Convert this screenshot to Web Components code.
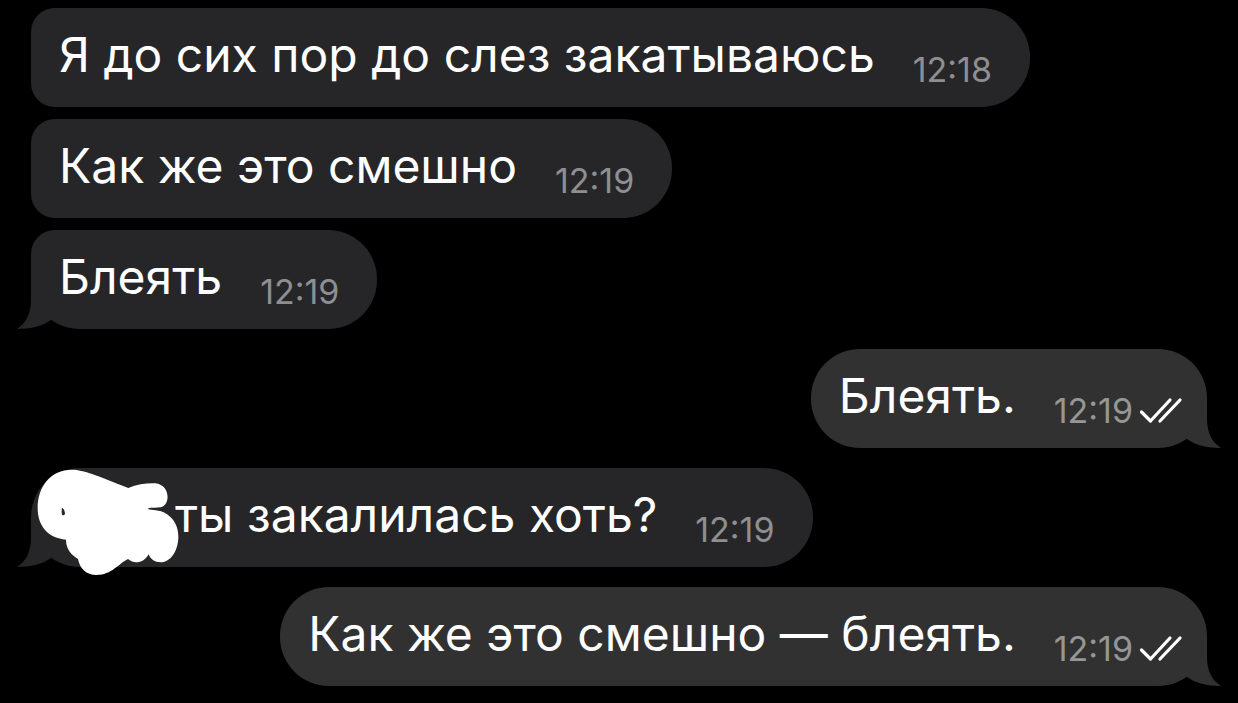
<!DOCTYPE html>
<html lang="ru">
<head>
<meta charset="utf-8">
<meta name="viewport" content="width=device-width, initial-scale=1">
<title>Чат</title>
<style>
  body { margin: 0; background: #000; font-family: Inter, "Noto Sans", sans-serif; color: #fff; }
</style>
</head>
<body>
<chat-thread>
  <chat-group>
    <chat-message time="12:18">Я до сих пор до слез закатываюсь</chat-message>
    <chat-message time="12:19">Как же это смешно</chat-message>
    <chat-message time="12:19" tail>Блеять</chat-message>
  </chat-group>
  <chat-group>
    <chat-message time="12:19" outgoing tail>Блеять.</chat-message>
  </chat-group>
  <chat-group>
    <chat-message time="12:19" single tail><ink-cover slot="cover"></ink-cover>ты закалилась хоть?</chat-message>
  </chat-group>
  <chat-group>
    <chat-message time="12:19" outgoing tail>Как же это смешно — блеять.</chat-message>
  </chat-group>
</chat-thread>

<script>
class ChatThread extends HTMLElement {
  constructor() {
    super();
    this.attachShadow({ mode: 'open' }).innerHTML = `
      <style>
        :host { display: block; }
        main { display: flex; flex-direction: column; gap: 20px; padding: 8px 31px 17px; }
      </style>
      <main><slot></slot></main>`;
  }
}

class ChatGroup extends HTMLElement {
  constructor() {
    super();
    this.attachShadow({ mode: 'open' }).innerHTML = `
      <style>
        :host { display: flex; flex-direction: column; gap: 12px; }
      </style>
      <slot></slot>`;
  }
}

class ChatMessage extends HTMLElement {
  connectedCallback() {
    if (this.shadowRoot) return;
    this.attachShadow({ mode: 'open' }).innerHTML = `
      <style>
        :host { display: flex; justify-content: flex-start; --fill: #262628; --meta: #8f8f91; }
        :host([outgoing]) { justify-content: flex-end; --fill: #313131; --meta: #969696; }
        article {
          position: relative; display: flex; gap: 38px;
          padding: 17px 38px 17px 28px;
          background: var(--fill);
          border-radius: 24px 49px 49px 24px;
        }
        :host([tail]) article { border-bottom-left-radius: 49px; }
        :host([single]) article, :host([outgoing]) article { border-radius: 49px; }
        :host([outgoing]) article { padding-right: 24px; }
        p { margin: 0; padding-bottom: 5px; font-size: 48px; line-height: 60px; }
        .meta { position: relative; align-self: flex-end; display: flex; align-items: center; gap: 6px;
          color: var(--meta); font-size: 34px; line-height: 40px; }
        .checks { display: none; width: 44px; height: 28px; }
        :host([outgoing]) .checks { display: block; }
        .tail { display: none; position: absolute; bottom: 0; left: -14px; width: 36px; height: 49px; fill: var(--fill); }
        :host([tail]) .tail { display: block; }
        :host([outgoing]) .tail { left: auto; right: -14px; transform: scaleX(-1); }
      </style>
      <article>
        <svg class="tail" viewBox="0 0 36 49" aria-hidden="true">
          <path d="M14 0V20C14 34 9 43 0 49C14 49 26 46 34 40L36 36V0Z"/>
        </svg>
        <slot name="cover"></slot>
        <p><slot></slot></p>
        <div class="meta">
          <time></time>
          <svg class="checks" viewBox="0 0 44 28" fill="none" stroke="#fff" stroke-width="3.2" stroke-linecap="round" stroke-linejoin="round" aria-hidden="true">
            <path d="M2.5 15L11.5 24L31 3M21 24L41 3"/>
          </svg>
        </div>
      </article>`;
    this.shadowRoot.querySelector('time').textContent = this.getAttribute('time');
  }
}

class InkCover extends HTMLElement {
  constructor() {
    super();
    this.attachShadow({ mode: 'open' }).innerHTML = `
      <style>
        :host { display: block; width: 116px; margin-right: -38px; }
        svg { position: absolute; left: 6px; top: 1px; width: 142px; height: 107px; }
      </style>
      <svg viewBox="110 42 426 321" fill="#fff" fill-rule="evenodd" aria-hidden="true">
        <path d="M215 44C250 44 290 62 384 99C410 88 440 84 465 85C510 90 512 150 480 157C465 160 445 156 443 161C445 166 470 162 490 172C525 190 535 220 534 250C532 290 510 322 482 322C462 322 450 312 445 298C435 315 422 322 408 322C397 322 390 317 383 312C355 325 335 360 288 360C258 360 238 340 233 312C215 300 197 285 197 254C145 250 112 215 112 160C112 95 150 44 215 44ZM185 158Q183 170 185 179Q190 184 194 177Q193 162 185 158Z"/>
      </svg>`;
  }
}

customElements.define('chat-thread', ChatThread);
customElements.define('chat-group', ChatGroup);
customElements.define('chat-message', ChatMessage);
customElements.define('ink-cover', InkCover);
</script>
</body>
</html>
